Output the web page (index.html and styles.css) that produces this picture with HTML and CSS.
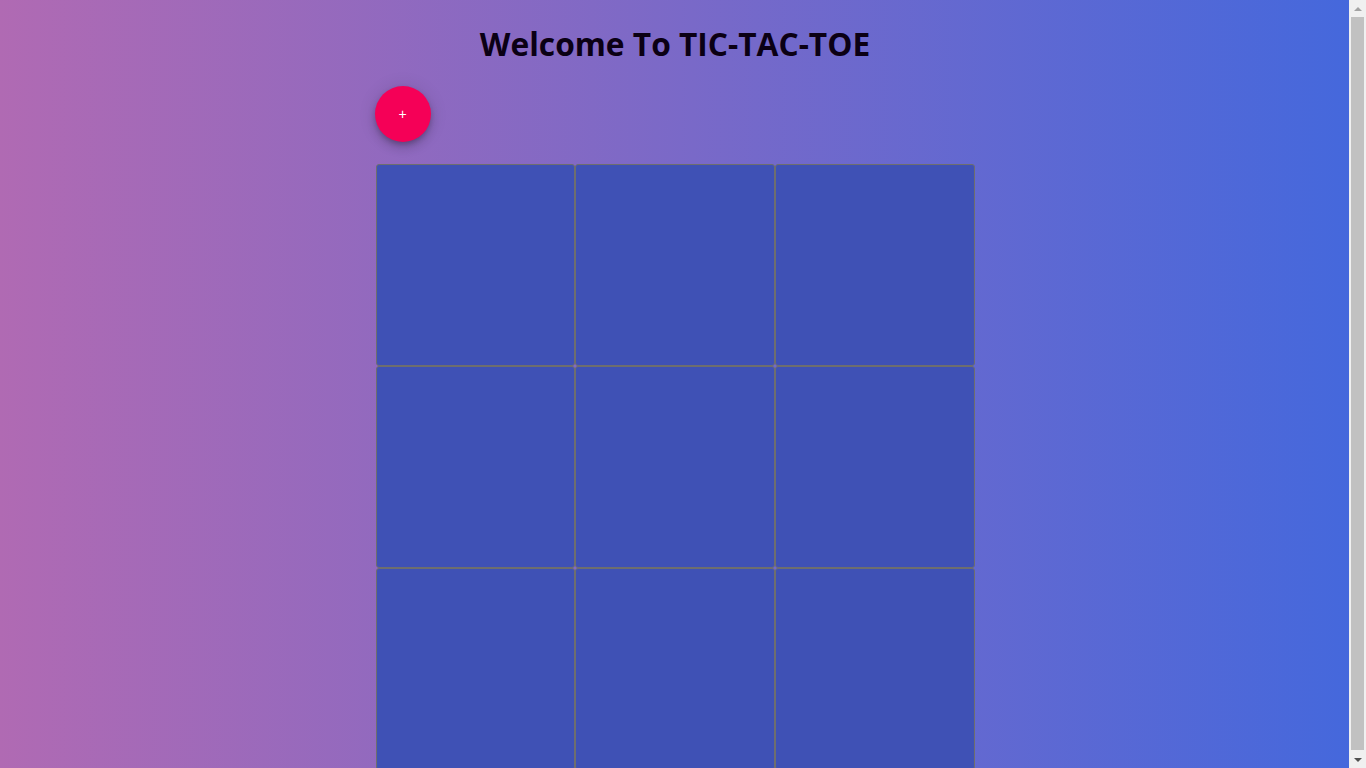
FILE: index.html
```html
<!DOCTYPE html>
<html lang="en">
<head>
<meta charset="utf-8">
<title>Tic Tac Toe</title>
<link rel="stylesheet" href="styles.css">
</head>
<body>
<div class="page">
  <div class="app">
    <h1 class="title">Welcome To TIC-TAC-TOE</h1>
    <div class="toolbar">
      <button class="fab" type="button" aria-label="New game">+</button>
    </div>
    <div class="board">
      <div class="cell"></div>
      <div class="cell"></div>
      <div class="cell"></div>
      <div class="cell"></div>
      <div class="cell"></div>
      <div class="cell"></div>
      <div class="cell"></div>
      <div class="cell"></div>
      <div class="cell"></div>
    </div>
  </div>
</div>
<div class="scrollbar" aria-hidden="true">
  <div class="sb-btn"><span class="arrow-up"></span></div>
  <div class="sb-track"><div class="sb-thumb"></div></div>
  <div class="sb-btn"><span class="arrow-down"></span></div>
</div>
</body>
</html>
```

FILE: styles.css
```css
body {
  margin: 0;
  overflow-x: hidden;
  font-family: "Open Sans", "Noto Sans", "DejaVu Sans", sans-serif;
}
.page {
  margin-right: 17px;
  padding-left: 1px;
  min-height: 100vh;
  background: linear-gradient(to right, #b06ab3, #4568dc);
}
.app {
  width: 599px;
  margin: 0 auto;
  display: flex;
  flex-direction: column;
}
.title {
  margin: 0;
  padding-top: 23px;
  height: 62px;
  box-sizing: border-box;
  text-align: center;
  font-size: 31.7px;
  font-weight: 700;
  line-height: 42px;
  color: #0b0014;
}
.toolbar {
  display: flex;
  padding: 24px 0 22px 0;
  margin-left: -1px;
}
.fab {
  width: 56px;
  height: 56px;
  border-radius: 50%;
  border: none;
  padding: 0;
  background: #f50057;
  color: #ffffff;
  font-family: "Liberation Sans", sans-serif;
  font-size: 14px;
  line-height: 1;
  box-shadow: 0 3px 5px -1px rgba(0,0,0,0.2), 0 6px 10px 0 rgba(0,0,0,0.14), 0 1px 18px 0 rgba(0,0,0,0.12);
  cursor: pointer;
}
.board {
  display: grid;
  grid-template-columns: repeat(3, 1fr);
  grid-auto-rows: 202px;
  padding-bottom: 8px;
}
.cell {
  background: #3f51b5;
  border: 1px solid #6e6e6e;
  border-radius: 3px;
}
.scrollbar {
  position: fixed;
  top: 0;
  right: 0;
  width: 17px;
  height: 100vh;
  background: #f0f0f0;
  display: flex;
  flex-direction: column;
}
.sb-btn {
  height: 17px;
  display: flex;
  align-items: center;
  justify-content: center;
}
.arrow-up,
.arrow-down {
  width: 0;
  height: 0;
  border-left: 4px solid transparent;
  border-right: 4px solid transparent;
}
.arrow-up {
  border-bottom: 4px solid #a3a3a3;
}
.arrow-down {
  border-top: 4px solid #505050;
}
.sb-track {
  flex: 1;
  display: flex;
  padding: 0 2px 1px 2px;
}
.sb-thumb {
  flex: 1;
  background: #c1c1c1;
}
```
